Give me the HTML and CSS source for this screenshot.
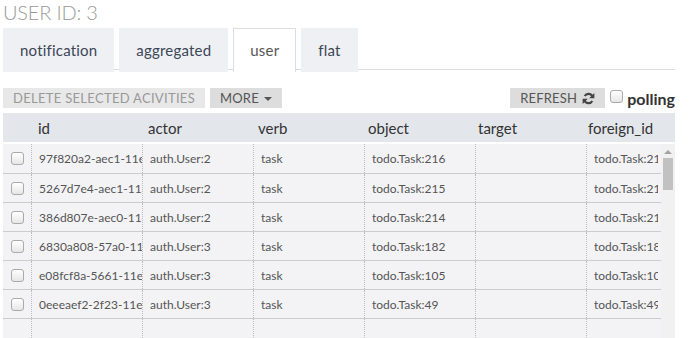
FILE: index.html
```html
<!DOCTYPE html>
<html lang="en">
<head>
    <meta charset="UTF-8">
    <title>Activities</title>
    <link rel="stylesheet" href="styles.css">
</head>
<body>
    <div class="page">
        <h2 class="user-title">USER ID: 3</h2>

        <ul class="tabs">
            <li><a href="#">notification</a></li>
            <li><a href="#">aggregated</a></li>
            <li class="active"><a href="#">user</a></li>
            <li><a href="#">flat</a></li>
        </ul>

        <div class="toolbar">
            <div class="toolbar-left">
                <button class="btn btn-disabled">DELETE SELECTED ACIVITIES</button>
                <button class="btn">MORE <span class="caret"></span></button>
            </div>
            <div class="toolbar-right">
                <button class="btn">REFRESH
                    <svg class="icon-refresh" viewBox="0 0 16 16" width="13" height="13">
                        <path d="M13.2 6.2 A5.4 5.4 0 0 0 3.3 5" fill="none" stroke="#444" stroke-width="2.6"/>
                        <path d="M15.2 1.2 L15.2 7.6 L8.8 7.6 Z" fill="#444"/>
                        <path d="M2.8 9.8 A5.4 5.4 0 0 0 12.7 11" fill="none" stroke="#444" stroke-width="2.6"/>
                        <path d="M0.8 14.8 L0.8 8.4 L7.2 8.4 Z" fill="#444"/>
                    </svg>
                </button>
                <label class="polling"><input type="checkbox" class="check"> polling</label>
            </div>
        </div>

        <div class="grid">
            <div class="grid-head">
                <span></span>
                <span>id</span>
                <span>actor</span>
                <span>verb</span>
                <span>object</span>
                <span>target</span>
                <span>foreign_id</span>
            </div>
            <div class="grid-body">
                <div class="rows">
                    <div class="row">
                        <div class="cell cell-check"><input type="checkbox" class="check"></div>
                        <div class="cell">97f820a2-aec1-11e6-8080-80008f5b7a8d</div>
                        <div class="cell">auth.User:2</div>
                        <div class="cell">task</div>
                        <div class="cell">todo.Task:216</div>
                        <div class="cell"></div>
                        <div class="cell">todo.Task:216</div>
                    </div>
                    <div class="row">
                        <div class="cell cell-check"><input type="checkbox" class="check"></div>
                        <div class="cell">5267d7e4-aec1-11e6-8080-80008f5b7a8d</div>
                        <div class="cell">auth.User:2</div>
                        <div class="cell">task</div>
                        <div class="cell">todo.Task:215</div>
                        <div class="cell"></div>
                        <div class="cell">todo.Task:215</div>
                    </div>
                    <div class="row">
                        <div class="cell cell-check"><input type="checkbox" class="check"></div>
                        <div class="cell">386d807e-aec0-11e6-8080-80008f5b7a8d</div>
                        <div class="cell">auth.User:2</div>
                        <div class="cell">task</div>
                        <div class="cell">todo.Task:214</div>
                        <div class="cell"></div>
                        <div class="cell">todo.Task:214</div>
                    </div>
                    <div class="row">
                        <div class="cell cell-check"><input type="checkbox" class="check"></div>
                        <div class="cell">6830a808-57a0-11e6-8080-80008f5b7a8d</div>
                        <div class="cell">auth.User:3</div>
                        <div class="cell">task</div>
                        <div class="cell">todo.Task:182</div>
                        <div class="cell"></div>
                        <div class="cell">todo.Task:182</div>
                    </div>
                    <div class="row">
                        <div class="cell cell-check"><input type="checkbox" class="check"></div>
                        <div class="cell">e08fcf8a-5661-11e6-8080-80008f5b7a8d</div>
                        <div class="cell">auth.User:3</div>
                        <div class="cell">task</div>
                        <div class="cell">todo.Task:105</div>
                        <div class="cell"></div>
                        <div class="cell">todo.Task:105</div>
                    </div>
                    <div class="row">
                        <div class="cell cell-check"><input type="checkbox" class="check"></div>
                        <div class="cell">0eeeaef2-2f23-11e6-8080-80008f5b7a8d</div>
                        <div class="cell">auth.User:3</div>
                        <div class="cell">task</div>
                        <div class="cell">todo.Task:49</div>
                        <div class="cell"></div>
                        <div class="cell">todo.Task:49</div>
                    </div>
                    <div class="row row-empty">
                        <div class="cell cell-check"></div>
                        <div class="cell"></div>
                        <div class="cell"></div>
                        <div class="cell"></div>
                        <div class="cell"></div>
                        <div class="cell"></div>
                        <div class="cell"></div>
                    </div>
                </div>
                <div class="scrollbar">
                    <span class="scroll-up"></span>
                    <span class="scroll-thumb"></span>
                </div>
            </div>
        </div>
    </div>
</body>
</html>
```

FILE: styles.css
```css
/* Reset */
body, h2, ul, li, button, div {
    margin: 0;
    padding: 0;
    box-sizing: border-box;
}

body {
    font-family: Lato, "Open Sans", sans-serif;
    background-color: #fff;
    color: #333;
    overflow: hidden;
}

.page {
    width: 672px;
    margin-left: 3px;
}

/* Title */
.user-title {
    font-size: 20px;
    font-weight: 300;
    color: #999;
    line-height: 24px;
    height: 28px;
    letter-spacing: -0.2px;
}

/* Tabs */
.tabs {
    list-style-type: none;
    display: flex;
    gap: 5px;
    border-bottom: 1px solid #ddd;
    height: 42px;
}

.tabs li {
    margin-bottom: -1px;
}

.tabs li a {
    display: block;
    height: 43px;
    line-height: 42px;
    padding: 0 16px;
    background-color: #eef0f4;
    color: #3c4654;
    font-size: 15px;
    letter-spacing: 0.2px;
    text-decoration: none;
    border: 1px solid transparent;
    border-bottom: none;
}

.tabs li.active a {
    background-color: #fff;
    border-color: #ddd;
    color: #555;
}

/* Toolbar */
.toolbar {
    display: flex;
    justify-content: space-between;
    margin-top: 18px;
    height: 20px;
}

.toolbar-left, .toolbar-right {
    display: flex;
    align-items: center;
    gap: 5px;
}

.btn {
    height: 20px;
    padding: 0 10px;
    border: none;
    background-color: #ddd;
    color: #555;
    font-family: inherit;
    font-size: 13px;
    letter-spacing: 0.2px;
    display: flex;
    align-items: center;
    gap: 5px;
}

.btn-disabled {
    background-color: #e8e8e8;
    color: #999;
    letter-spacing: 0.3px;
}

.caret {
    display: inline-block;
    border-top: 4px solid #555;
    border-left: 4px solid transparent;
    border-right: 4px solid transparent;
    margin-top: 1px;
}

.icon-refresh {
    display: block;
}

.polling {
    display: flex;
    align-items: center;
    gap: 4px;
    font-size: 16px;
    font-weight: bold;
    color: #333;
}

.polling .check {
    margin-top: -3px;
}

.check {
    appearance: none;
    -webkit-appearance: none;
    width: 13px;
    height: 13px;
    margin: 0;
    border: 1px solid #aaa;
    border-radius: 3px;
    background: linear-gradient(#fff, #e6e6e6);
}

/* Grid */
.grid {
    margin-top: 5px;
}

.grid-head {
    display: grid;
    grid-template-columns: 35px repeat(5, 110px) 87px;
    height: 29px;
    align-items: center;
    background-color: #e3e7ec;
    font-size: 15px;
    color: #333;
}

.grid-body {
    display: flex;
    height: 200px;
    padding-top: 2px;
}

.rows {
    width: 658px;
    overflow: hidden;
}

.row {
    display: grid;
    grid-template-columns: 29px repeat(5, 111px) 71px;
    height: 29px;
    background-color: #f3f3f5;
    border-bottom: 1px solid #ccc;
    font-size: 12px;
    color: #555;
}

.row:first-child {
    height: 30px;
}

.row-empty {
    border-bottom: none;
}

.cell {
    display: flex;
    align-items: center;
    padding-left: 7px;
    white-space: nowrap;
    overflow: hidden;
    border-right: 1px dotted #bbb;
}

.cell:last-child {
    border-right: none;
}

.cell-check {
    padding-left: 8px;
}

/* Scrollbar */
.scrollbar {
    width: 14px;
    background-color: #f1f1f1;
    display: flex;
    flex-direction: column;
    align-items: center;
}

.scroll-up {
    margin-top: 6px;
    border-bottom: 4px solid #a3a3a3;
    border-left: 4px solid transparent;
    border-right: 4px solid transparent;
}

.scroll-thumb {
    margin-top: 4px;
    width: 10px;
    height: 32px;
    background-color: #c1c1c1;
}
```
